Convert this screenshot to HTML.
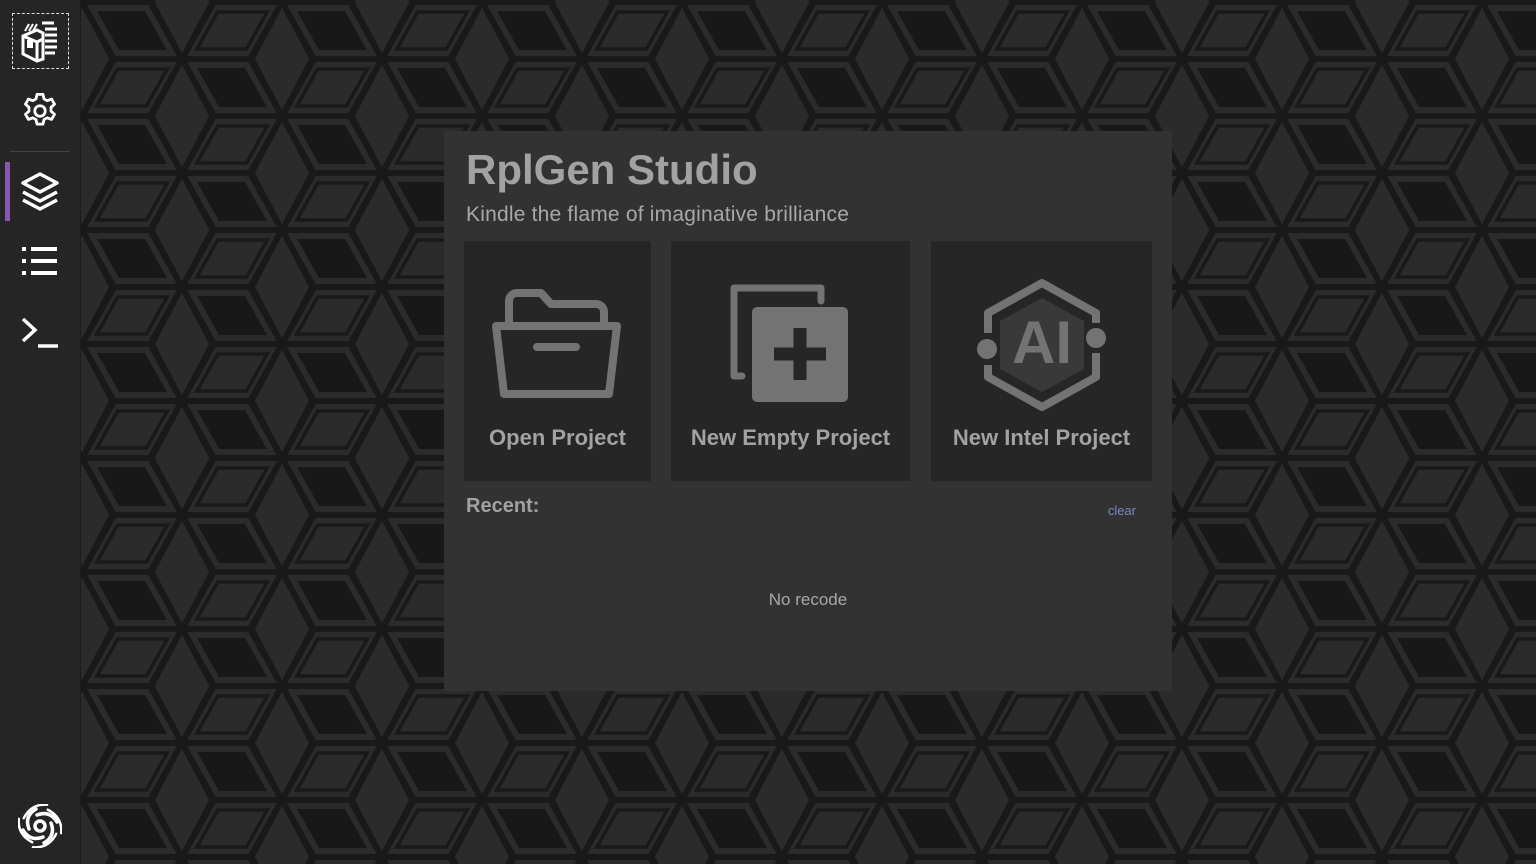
<!DOCTYPE html>
<html><head><meta charset="utf-8"><style>
*{margin:0;padding:0;box-sizing:border-box}
body{width:1536px;height:864px;overflow:hidden;background:#2b2b2b;font-family:"Liberation Sans",sans-serif;position:relative}
#bg{position:absolute;left:80px;top:0}
.side{position:absolute;left:0;top:0;width:81px;height:864px;background:#252526;border-right:1px solid #1c1c1c}
.ic{position:absolute;left:0;width:80px;display:flex;justify-content:center}
.panel{position:absolute;left:444px;top:131px;width:728px;height:560px;background:#323232}
h1{position:absolute;left:22px;top:15px;font-size:42px;font-weight:bold;color:#a2a2a2}
.sub{position:absolute;left:22px;top:72px;font-size:21px;color:#a8a8a8;letter-spacing:0.2px}
.card{position:absolute;top:110px;height:240px;background:#262626}
.card .lbl{position:absolute;left:0;right:0;top:184px;text-align:center;font-size:22px;font-weight:bold;color:#a2a2a2}
.card svg{position:absolute}
.recent{position:absolute;left:22px;top:364px;font-size:20px;font-weight:bold;color:#a2a2a2}
.clear{position:absolute;right:36px;top:372px;font-size:13px;color:#7b86c8}
.none{position:absolute;left:0;right:0;top:459px;text-align:center;font-size:17px;color:#a8a8a8}
</style></head><body>
<svg id="bg" width="1456" height="864">
<defs>
<g id="u">
<polygon points="100,-51 127,0 100,51 73,0" fill="#2b2b2b"/>
<polygon points="5.2,3 66.2,3 94.7,54 33.7,54" fill="#2b2b2b"/>
<polygon points="15,9 63,9 84.9,48 36.9,48" fill="#181818"/>
<polygon points="194.8,3 133.8,3 105.3,54 166.3,54" fill="#2b2b2b"/>
<polygon points="185.2,10 135.6,10 114.9,47 164.5,47" fill="none" stroke="#191919" stroke-width="3.5"/>
</g>
<g id="row"><use href="#u" x="-400"/><use href="#u" x="-200"/><use href="#u" x="0"/><use href="#u" x="200"/><use href="#u" x="400"/></g>
<g id="blk"><use href="#row" x="-200" y="-114"/><use href="#row" x="-100" y="-57"/><use href="#row" x="0" y="0"/><use href="#row" x="100" y="57"/><use href="#row" x="200" y="114"/><use href="#row" x="-100" y="57"/><use href="#row" x="100" y="-57"/><use href="#row" x="0" y="114"/><use href="#row" x="0" y="-114"/></g>
<pattern id="p" patternUnits="userSpaceOnUse" x="102" y="59" width="200" height="114">
<rect x="0" y="0" width="200" height="114" fill="#191919"/>
<use href="#blk"/>
</pattern></defs>
<rect width="1456" height="864" fill="url(#p)"/>
</svg>
<div class="side">
 <div class="ic" style="top:13px"><div style="width:57px;height:56px;border:1px dashed #ddd;display:flex;align-items:center;justify-content:center">
 <svg width="44" height="44" viewBox="0 0 44 44" fill="none" stroke="#fff" stroke-width="3"><path d="M5 17 L19 11 L25 14 L25 40 L19 42 L5 35Z"/><path d="M5 17 L19 23 L25 20 M19 23 V42"/><rect x="9" y="21" width="6" height="8" fill="#fff" stroke="none"/><path d="M24 4h12M27 10h12M27 16h12M27 22h12M27 28h12M27 34h10" stroke-width="3"/><path d="M7 12 L11 5 M11 12 L15 5 M15 12 L19 5" stroke-width="2"/></svg></div></div>
 <div class="ic" style="top:90px"><svg width="42" height="42" viewBox="0 0 24 24" fill="none" stroke="#fff" stroke-width="1.6" stroke-linejoin="round"><circle cx="12" cy="12" r="3"/><path d="M10.3 2.5h3.4l.6 2.6 1.8 1 2.5-.9 1.7 2.9-2 1.8v2.2l2 1.8-1.7 2.9-2.5-.9-1.8 1-.6 2.6h-3.4l-.6-2.6-1.8-1-2.5.9-1.7-2.9 2-1.8v-2.2l-2-1.8 1.7-2.9 2.5.9 1.8-1z"/></svg></div>
 <div style="position:absolute;left:10px;top:151px;width:60px;height:1px;background:#444"></div>
 <div style="position:absolute;left:5px;top:162px;width:5px;height:59px;background:#8a56ad"></div>
 <div class="ic" style="top:170px"><svg width="42" height="44" viewBox="0 0 42 44" fill="none" stroke="#fff" stroke-width="3.5" stroke-linejoin="round"><path d="M21 4 L38 13 L21 22 L4 13Z"/><path d="M4 22 L21 31 L38 22"/><path d="M4 30 L21 39 L38 30"/></svg></div>
 <div class="ic" style="top:245px"><svg width="38" height="32" viewBox="0 0 38 32" fill="#fff"><rect x="1" y="2" width="4" height="4"/><rect x="10" y="2" width="26" height="4"/><rect x="1" y="14" width="4" height="4"/><rect x="10" y="14" width="26" height="4"/><rect x="1" y="26" width="4" height="4"/><rect x="10" y="26" width="26" height="4"/></svg></div>
 <div class="ic" style="top:315px"><svg width="40" height="36" viewBox="0 0 40 36" fill="none" stroke="#fff" stroke-width="3.5"><path d="M3 4 L15 15 L3 26"/><path d="M18 31 H38"/></svg></div>
 <div class="ic" style="top:804px"><svg width="44" height="44" viewBox="-22 -22 44 44" fill="none" stroke="#fff" stroke-width="3.5" stroke-linecap="round"><circle r="5"/><g id="bl"><path d="M-3 -11 Q10 -16 17 -4"/></g><use href="#bl" transform="rotate(90)"/><use href="#bl" transform="rotate(180)"/><use href="#bl" transform="rotate(270)"/><g stroke-width="2.5"><path d="M-6 -17 Q10 -22 20 -10" transform="rotate(45)"/><path d="M-6 -17 Q10 -22 20 -10" transform="rotate(135)"/><path d="M-6 -17 Q10 -22 20 -10" transform="rotate(225)"/><path d="M-6 -17 Q10 -22 20 -10" transform="rotate(315)"/></g></svg></div>
</div>
<div class="panel">
 <h1>RplGen Studio</h1>
 <div class="sub">Kindle the flame of imaginative brilliance</div>
 <div class="card" style="left:20px;width:187px">
  <svg style="left:28px;top:36px" width="130" height="125" viewBox="0 0 130 125" fill="none" stroke="#737373" stroke-width="8" stroke-linejoin="round" stroke-linecap="round"><path d="M17 47 V24 a8 8 0 0 1 8-8 H49 L59 27 H104 a8 8 0 0 1 8 8 V47"/><path d="M4 49 H125 L117 117 H12Z"/><path d="M45 70 H84"/></svg>
  <div class="lbl">Open Project</div></div>
 <div class="card" style="left:227px;width:239px">
  <svg style="left:54px;top:36px" width="130" height="130" viewBox="0 0 130 130" fill="none"><path d="M96 24 V11 H9 V99 H17" stroke="#737373" stroke-width="7" stroke-linecap="round" stroke-linejoin="round"/><rect x="27" y="30" width="96" height="95" rx="5" fill="#737373"/><path d="M75 51 V103 M49 77 H101" stroke="#262626" stroke-width="13"/></svg>
  <div class="lbl">New Empty Project</div></div>
 <div class="card" style="left:487px;width:221px">
  <svg style="left:41px;top:34px" width="140" height="140" viewBox="0 0 140 140" fill="none"><path d="M16 58 V38 L70 8 L124 38 V48 M124 78 V102 L70 132 L16 102 V90" stroke="#737373" stroke-width="8" stroke-linejoin="round"/><polygon points="70,23 112,46 112,94 70,117 28,94 28,46" fill="#393939"/><circle cx="15" cy="74" r="10" fill="#737373"/><circle cx="124" cy="63" r="10" fill="#737373"/><text x="70" y="88" text-anchor="middle" font-family="Liberation Sans" font-weight="bold" font-size="60" fill="#737373">AI</text></svg>
  <div class="lbl">New Intel Project</div></div>
 <div class="recent">Recent:</div>
 <div class="clear">clear</div>
 <div class="none">No recode</div>
</div>
</body></html>
